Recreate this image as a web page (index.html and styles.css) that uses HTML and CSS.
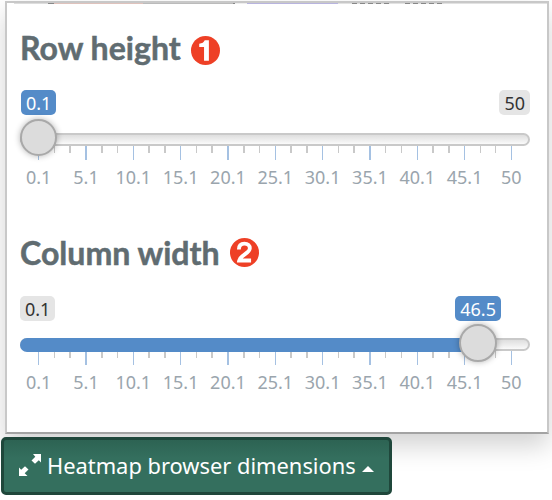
FILE: index.html
```
<!DOCTYPE html>
<html lang="en">
<head>
<meta charset="utf-8">
<title>Heatmap browser dimensions</title>
<link rel="stylesheet" href="styles.css">
</head>
<body>
<div class="panel">
  <div class="strip"></div>
  <section class="control first">
    <h2>Row height <svg class="badge" viewBox="0 0 30 30"><circle cx="15" cy="15" r="15" fill="#ee4026"/><path d="M18.500 4.500V25.500h-5V11.500H8.500V8Q13 7.700 14.200 4.500Z" fill="#fff"/></svg></h2>
    <div class="values"><span class="tag active">0.1</span><span class="tag">50</span></div>
    <div class="track"><div class="handle"></div></div>
    <div class="scale"></div>
  </section>
  <section class="control second">
    <h2>Column width <svg class="badge" viewBox="0 0 30 30"><circle cx="15" cy="15" r="15" fill="#ee4026"/><path d="M9.200 11.800C9.200 7.500 11.500 5.800 15 5.800S20.500 7.800 20.500 10.600C20.500 16 10.500 17.500 9.500 23.300H21.800" fill="none" stroke="#fff" stroke-width="4"/></svg></h2>
    <div class="values"><span class="tag">0.1</span><span class="tag active high">46.5</span></div>
    <div class="track"><div class="fill"></div><div class="handle"></div></div>
    <div class="scale"></div>
  </section>
</div>
<button class="toggle">
  <svg class="expand" viewBox="0 0 22 22"><path d="M14 0H22V8.500L19.800 6.300L16 9.800L12.500 6.500L16.300 2.700ZM0 13.500L2.200 15.700L6 12.200L9.500 15.500L5.700 19.300L8.500 22H0Z" fill="#fff"/></svg>
  <span class="caption">Heatmap browser dimensions</span>
  <i class="caret"></i>
</button>
<script src="scale.js"></script>
</body>
</html>
```
FILE: styles.css
```
* { box-sizing: border-box; }
body {
  margin: 0;
  padding: 1px 0 0 1px;
  width: 552px;
  height: 500px;
  overflow: hidden;
  background: #fff;
  font-family: "Noto Sans", sans-serif;
}
.panel {
  width: 544px;
  height: 433px;
  margin-left: 4px;
  border: 2px solid #c8c8c8;
  border-bottom-color: #a3a3a3;
  background: #fff;
  box-shadow: 0 12px 24px rgba(0, 0, 0, .175);
}
.strip {
  height: 1px;
  margin-left: 7px;
  background:
    repeating-linear-gradient(90deg, #888 0 5px, #ddd 5px 8px) 338px 0 / 38px 1px no-repeat,
    repeating-linear-gradient(90deg, #888 0 5px, #ddd 5px 8px) 391px 0 / 39px 1px no-repeat,
    linear-gradient(90deg, #ddd 0 34px, #888 34px 40px, #dfc2bc 40px 129px, #bbb 129px 219px, #888 219px 221px, #eee 221px 233px, #b8b4df 233px 324px, #e2e2e2 324px);
}
.control {
  height: 205px;
  padding: 23px 0 0 13px;
}
h2 {
  display: flex;
  align-items: center;
  gap: 10px;
  height: 42px;
  margin: 0;
  color: #606c71;
  font: 700 32.100px/42px Lato, sans-serif;
  -webkit-text-stroke: .5px #606c71;
}
.badge { width: 29px; height: 29px; margin-top: 4px; }
.second .badge { margin-top: -2px; }
.values {
  display: flex;
  justify-content: space-between;
  width: 510px;
  height: 26px;
  margin-top: 21px;
}
.second .values { margin-top: 22px; }
.first .active { margin-left: 1px; }
.tag {
  height: 25px;
  padding: 0 5px;
  border-radius: 5px;
  background: #e5e5e5;
  color: #333;
  font-size: 18px;
  line-height: 27px;
}
.active { background: #548bc8; color: #fff; }
.high { margin-right: 29px; }
.track {
  position: relative;
  width: 510px;
  height: 13px;
  margin-top: 17px;
  border: 2px solid #c9c9c9;
  border-radius: 7px;
  background: linear-gradient(#dedede, #fafafa);
}
.second .track { margin-top: 16px; }
.fill {
  width: 458px;
  height: 14px;
  margin: -2px;
  border-radius: 7px 0 0 7px;
  background: #548bc8;
}
.handle {
  position: absolute;
  top: -16px;
  left: -2px;
  width: 37px;
  height: 37px;
  border: 2px solid #a9a9a9;
  border-radius: 50%;
  background: #dcdcdc;
  box-shadow: 0 0 6px rgba(0, 0, 0, .3);
}
.second .handle { left: 437px; width: 38px; height: 38px; }
.scale {
  display: flex;
  width: 521px;
  margin-left: -5px;
}
.mark { flex: 0 0 47.330px; }
.mark:last-child { margin-left: -.600px; }
.ticks {
  display: grid;
  grid-template-columns: repeat(3, 1fr);
  justify-items: center;
  height: 14px;
}
.tick { width: 1.500px; height: 7px; background: #c9c9c9; }
.tick.major { height: 14px; background: #a5c1e2; }
.mark:first-child .tick:first-child,
.mark:last-child .tick:last-child { visibility: hidden; }
.label {
  color: #9aa5ad;
  font-size: 18px;
  line-height: 24px;
  margin-top: 5px;
  text-align: center;
}
.toggle {
  display: flex;
  align-items: center;
  width: 391px;
  height: 58px;
  margin-top: 3px;
  padding: 0 0 0 15px;
  border: 3px solid #1f473b;
  border-radius: 5px;
  background: linear-gradient(#2d6353, #346f5e 35%);
  color: #fff;
  font: 21.860px/30px "Noto Sans", sans-serif;
  white-space: nowrap;
}
.expand { flex: none; width: 22px; height: 22px; margin: -2px 6px 0 0; }
.caption { margin-top: 0; }
.caret {
  margin: 5px 0 0 6px;
  border: 6px solid transparent;
  border-top: 0;
  border-bottom-color: #fff;
}
```
FILE: scale.js
```
const labels = ["0.1", "5.1", "10.1", "15.1", "20.1", "25.1", "30.1", "35.1", "40.1", "45.1", "50"];
document.querySelectorAll(".scale").forEach(scale => {
  scale.innerHTML = labels.map(label =>
    `<div class="mark"><div class="ticks"><i class="tick"></i><i class="tick major"></i><i class="tick"></i></div><div class="label">${label}</div></div>`
  ).join("");
});
```
